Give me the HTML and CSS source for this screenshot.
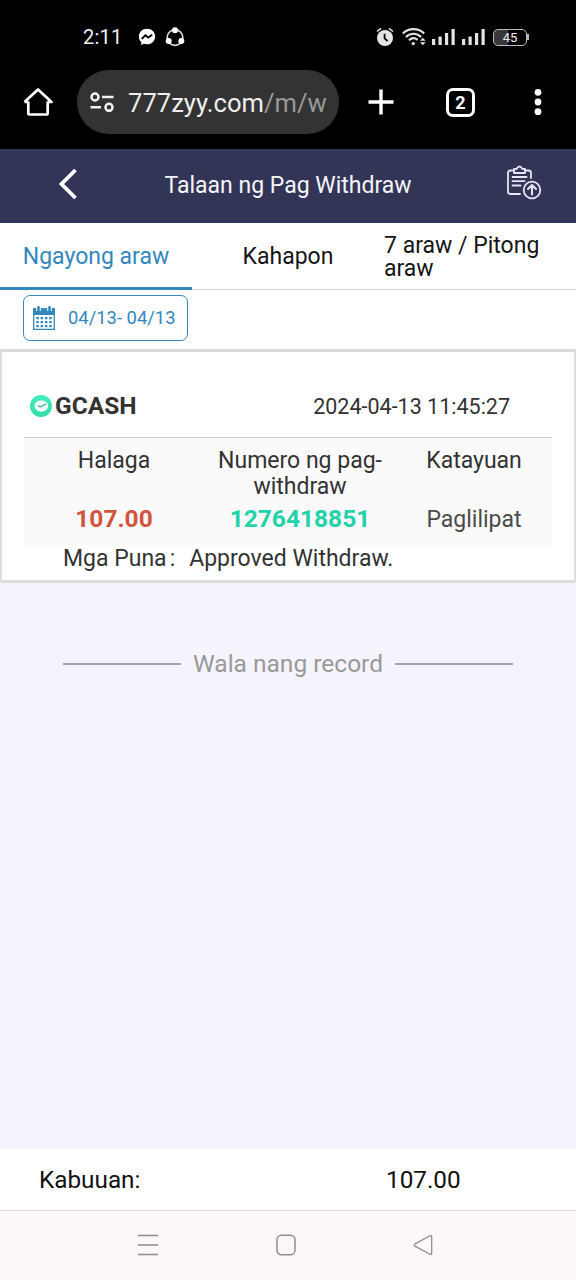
FILE: index.html
```html
<!DOCTYPE html>
<html lang="fil">
<head>
<meta charset="utf-8">
<title>Talaan ng Pag Withdraw</title>
<link rel="stylesheet" href="styles.css">
</head>
<body>
<div class="status">
  <span class="time">2:11</span>
  <svg class="messenger" width="18" height="18" viewBox="0 0 18 18"><path d="M9 .8C4.300 .8.900 4.100.900 8.500c0 2.300.900 4.300 2.400 5.700v2.800l2.500-1.200c1 .3 2.100.5 3.200.5 4.700 0 8.100-3.400 8.100-7.800S13.700.8 9 .8z" fill="#fff"/><path d="M3.800 11l3.600-3.800 2.800 2.300 4-2.700" fill="none" stroke="#000" stroke-width="1.900"/></svg>
  <svg class="share" width="20" height="20" viewBox="0 0 20 20"><circle cx="10" cy="10.500" r="7.800" fill="none" stroke="#ddd" stroke-width="1.700"/><g fill="#fff"><circle cx="10" cy="3.300" r="3"/><circle cx="3.700" cy="14" r="3"/><circle cx="16.300" cy="14" r="3"/></g></svg>
  <div class="system">
    <svg width="18" height="20" viewBox="0 0 18 20"><circle cx="9" cy="11" r="8" fill="#e4e4e4"/><path d="M1 4.500L5 1.300M17 4.500l-4-3.200" stroke="#e4e4e4" stroke-width="1.600"/><path d="M8.600 6.800v4.600l3 2.600" fill="none" stroke="#000" stroke-width="1.800"/></svg>
    <svg class="wifi" width="24" height="20" viewBox="0 0 24 20"><g fill="none" stroke="#e4e4e4" stroke-width="2.100"><path d="M.8 6.500C6.500.6 16.500.6 22.200 6.500"/><path d="M3.900 10c4.300-4.400 10.900-4.400 15.200 0"/><path d="M7 13.300c2.600-2.500 6-2.500 8.600-.4"/></g><circle cx="11.300" cy="16.600" r="1.700" fill="#e4e4e4"/><path d="M18 13.700l2.800-3 2.800 3zM18 15.300l2.800 3 2.800-3z" fill="#e4e4e4"/></svg>
    <svg class="signal" width="23" height="18" viewBox="0 0 23 18"><path d="M0 11h3.200v6H0zM6.500 8.500h3.200V17H6.500zM13 5h3.200v12H13zM19.500 1h3.200v16h-3.200z" fill="#e4e4e4"/></svg>
    <svg class="signal second" width="23" height="18" viewBox="0 0 23 18"><path d="M0 11h3.200v6H0zM6.500 8.500h3.200V17H6.500zM13 5h3.200v12H13zM19.500 1h3.200v16h-3.200z" fill="#e4e4e4"/></svg>
    <span class="battery">45</span><span class="battery-tip"></span>
  </div>
</div>
<div class="browser">
  <svg class="home" width="30" height="30" viewBox="0 0 30 30"><path d="M5.300 14.500V26q0 1.500 1.500 1.500h16.400q1.500 0 1.500-1.500V14.500M1.500 15L15 2.500 28.500 15h-4M1.500 15h4" fill="none" stroke="#fff" stroke-width="2.700" stroke-linejoin="round"/></svg>
  <div class="address">
    <svg width="24" height="20" viewBox="0 0 24 20"><g fill="none" stroke="#f2f2f2" stroke-width="2.500"><circle cx="5" cy="5" r="3.500"/><path d="M12 5h11.500M.500 15.300H11"/><circle cx="19" cy="15.300" r="3.500"/></g></svg>
    <span class="url">777zyy.com<span class="path">/m/w</span></span>
  </div>
  <svg class="plus" width="26" height="26" viewBox="0 0 26 26"><path d="M13 .500v25M.500 13h25" stroke="#fff" stroke-width="3.400"/></svg>
  <span class="count">2</span>
  <svg class="dots" width="8" height="28" viewBox="0 0 8 28"><g fill="#fff"><circle cx="4" cy="4.300" r="3.400"/><circle cx="4" cy="14" r="3.400"/><circle cx="4" cy="23.700" r="3.400"/></g></svg>
</div>
<header class="header">
  <svg class="back" width="20" height="32" viewBox="0 0 20 32"><path d="M17.500 2L3.500 16l14 14" fill="none" stroke="#fff" stroke-width="3.800"/></svg>
  <h1 class="title">Talaan ng Pag Withdraw</h1>
  <svg class="record" width="36" height="36" viewBox="0 0 36 36"><g fill="none" stroke="#e4e5f5" stroke-width="1.800" stroke-linecap="round" stroke-linejoin="round"><path d="M8 5.500H4.500Q2 5.500 2 8v18.500Q2 29 4.500 29H14M19 5.500h3.500Q25 5.500 25 8v5"/><path d="M8 4h2.500q3-5 6 0H19V8H8zM6.500 12h14M6.500 16.200h12M6.500 20.500h8"/><circle cx="26" cy="25" r="8.300"/><path d="M26 29.500v-9M22 24l4-4 4 4" stroke-width="2.100"/></g></svg>
</header>
<nav class="tabs">
  <div class="tab active"><span>Ngayong araw</span></div>
  <div class="tab"><span>Kahapon</span></div>
  <div class="tab week"><span>7 araw / Pitong<br>araw</span></div>
</nav>
<div class="filter">
  <div class="range">
    <svg width="22" height="24" viewBox="0 0 22 24"><path d="M.700 3h20.600v20.300H.700z" fill="#fff" stroke="#3387bd" stroke-width="1.300"/><path d="M0 2.500h22V9H0z" fill="#3387bd"/><path d="M5.500 0v5M16.500 0v5" stroke="#fff" stroke-width="4.500"/><path d="M5.500 1.300v3M16.500 1.300v3" stroke="#3387bd" stroke-width="2.600" stroke-linecap="round"/><path d="M3.300 12.200h15.500M3.300 16.200h15.500M3.300 20.200h15.500" stroke="#3387bd" stroke-width="2.300" stroke-dasharray="2.500 1.800"/></svg>
    <span class="dates">04/13- 04/13</span>
  </div>
</div>
<main class="content">
  <section class="card">
    <div class="card-head">
      <svg width="22" height="22" viewBox="0 0 22 22"><defs><linearGradient id="g" x2="0" y2="1"><stop stop-color="#42edbd"/><stop offset="1" stop-color="#32dba9"/></linearGradient></defs><circle cx="11" cy="11" r="11" fill="url(#g)"/><ellipse cx="11.300" cy="11" rx="6.900" ry="5.800" fill="#effdf8"/><path d="M8 10.500l2 1.500 6-3" fill="none" stroke="#43a98a" stroke-width="1.200"/></svg>
      <strong class="method">GCASH</strong>
      <span class="stamp">2024-04-13 11:45:27</span>
    </div>
    <div class="details">
      <div class="col"><span class="label">Halaga</span><strong class="value amount">107.00</strong></div>
      <div class="col"><span class="label">Numero ng pag-<br>withdraw</span><strong class="value ref">1276418851</strong></div>
      <div class="col"><span class="label">Katayuan</span><span class="value state">Paglilipat</span></div>
    </div>
    <div class="note"><span>Mga Puna<span class="colon">:</span></span><span class="note-text">Approved Withdraw.</span></div>
  </section>
  <div class="end"><span class="rule"></span><span class="end-text">Wala nang record</span><span class="rule"></span></div>
</main>
<footer class="total"><span class="total-label">Kabuuan:</span><span>107.00</span></footer>
<div class="keys">
  <svg width="20" height="22" viewBox="0 0 20 22"><path d="M0 1.500h20M0 11h20M0 20.500h20" stroke="#938c8e" stroke-width="1.500"/></svg>
  <svg width="20" height="22" viewBox="0 0 20 22"><rect x="1" y="1.200" width="18" height="19.600" rx="4.500" fill="none" stroke="#938c8e" stroke-width="1.500"/></svg>
  <svg width="20" height="22" viewBox="0 0 20 22"><path d="M2 9.900L17 1.800q1.700-.7 1.700 1v16.400q0 1.700-1.700 1L2 12.100q-1.600-1.100 0-2.200z" fill="none" stroke="#938c8e" stroke-width="1.300"/></svg>
</div>
</body>
</html>
```
FILE: styles.css
```css
* { box-sizing: border-box; }
body { margin: 0; width: 576px; height: 1280px; display: flex; flex-direction: column; overflow: hidden; background: #f5f4fd; color: #333; font: 23px/1 Roboto, sans-serif; white-space: nowrap; }
svg { display: block; flex: none; }
.status { height: 70px; flex: none; background: #000; color: #f0f0f0; display: flex; align-items: center; padding: 4px 47px 0 83px; }
.time { width: 55px; font-size: 20px; letter-spacing: .2px; }
.share { margin-left: 9px; }
.system { margin-left: auto; display: flex; align-items: center; }
.wifi { margin-left: 8px; }
.signal { margin-left: 6px; }
.signal.second { margin-left: 7px; }
.battery { width: 34px; height: 17px; margin-left: 8px; border: 1.500px solid #bbb; border-radius: 5px; background: linear-gradient(90deg, #383838 45%, #000 45%); font-size: 13px; line-height: 15px; text-align: center; }
.battery-tip { width: 2px; height: 6px; background: #bbb; }
.browser { height: 79px; flex: none; background: #000; display: flex; align-items: center; padding: 0 34px 15px 23px; }
.address { width: 262px; height: 64px; margin-left: 24px; padding-left: 13px; border-radius: 32px; background: #333; display: flex; align-items: center; }
.url { margin-left: 14px; padding-top: 3px; color: #eee; font-size: 25.6px; }
.path { color: #999; }
.plus { margin-left: 29px; }
.count { width: 29px; height: 29px; margin-left: 52px; border: 3px solid #fff; border-radius: 7px; color: #fff; font-size: 18px; font-weight: 700; line-height: 23px; text-align: center; }
.dots { margin-left: auto; }
.header { height: 74px; flex: none; background: #333557; color: #f5f5fc; display: flex; align-items: center; padding: 0 34px 4px 58px; }
.title { margin: 2px 0 0 86.5px; font-size: 23px; font-weight: 400; }
.record { margin: -3px 0 0 auto; }
.tabs { height: 67px; flex: none; display: grid; grid-template-columns: repeat(3, 1fr); background: #fff; color: #151515; border-bottom: 1px solid #d5d5d5; }
.tab { display: flex; align-items: center; justify-content: center; padding-top: 1px; line-height: 23px; }
.active { color: #3387bd; box-shadow: inset 0 -2px #3387bd, 0 1px #3387bd; }
.week { justify-content: flex-start; }
.filter { height: 59px; flex: none; background: #fff; padding: 5px 23px; }
.range { width: 165px; height: 46px; border: 1.500px solid #3387bd; border-radius: 7px; color: #3387bd; display: flex; align-items: center; padding-left: 9px; }
.dates { margin-left: 13px; font-size: 18.4px; }
.content { flex: 1; min-height: 0; }
.card { height: 234px; border: 2px solid #dedede; border-top: 3px solid #dadada; border-bottom: 3px solid #dcdcdc; background: #fff; padding: 0 22px; }
.card-head { height: 86px; border-bottom: 1px solid #cecece; display: flex; align-items: center; padding: 23px 0 0 6px; }
.method { margin-left: 3px; font-size: 24.5px; }
.stamp { margin-left: auto; margin-right: 42px; padding-top: 1px; font-size: 21.5px; }
.details { height: 107px; background: #fafafa; display: grid; grid-template-columns: 180px 192px 1fr; }
.col { display: flex; flex-direction: column; align-items: center; justify-content: space-between; padding: 10px 0 13px; line-height: 26px; text-align: center; }
.value { font-size: 24.5px; }
.amount { color: #d15440; }
.ref { color: #24d2aa; }
.state { padding-top: 1px; margin-bottom: -1px; font-size: 23px; color: #4a4a4a; }
.note { display: flex; padding: 2px 0 0 39px; }
.colon { margin-left: 3px; }
.note-text { margin-left: 14px; }
.end { display: flex; align-items: center; justify-content: center; gap: 12px; padding-top: 69px; color: #999; font-size: 24.5px; }
.rule { width: 118px; height: 2px; background: #a3a3a5; }
.total { height: 62px; flex: none; background: #fff; border-bottom: 1px solid #dddada; color: #111; display: flex; align-items: center; padding: 1px 0 0 39px; font-size: 24.3px; }
.total-label { width: 347px; }
.keys { height: 69px; flex: none; background: #fdf7f7; display: flex; justify-content: space-between; align-items: center; padding: 0 143px 2px 138px; }
```
